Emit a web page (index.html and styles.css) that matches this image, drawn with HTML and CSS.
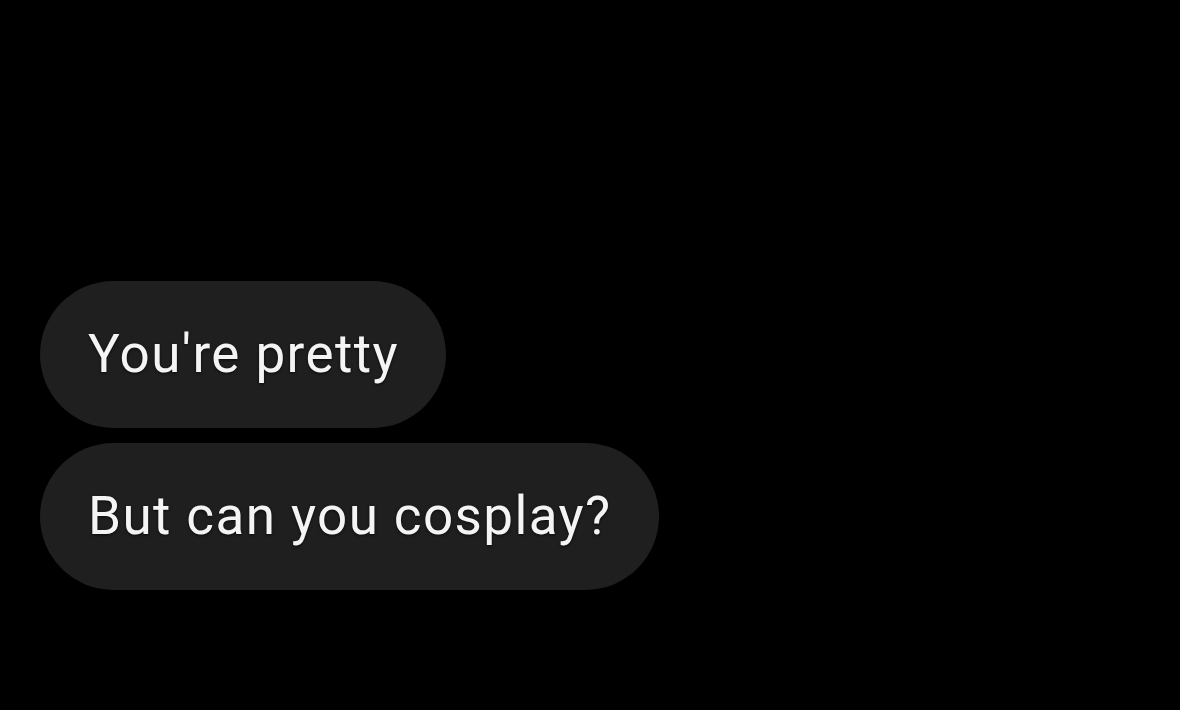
FILE: index.html
```html
<!DOCTYPE html>
<html>
<head>
<meta charset="utf-8">
<link rel="stylesheet" href="styles.css">
</head>
<body>
<div class="thread">
  <div class="bubble">You're pretty</div>
  <div class="bubble">But can you cosplay?</div>
</div>
</body>
</html>
```
FILE: styles.css
```css
html, body {
  margin: 0;
  padding: 0;
  background: #000;
  width: 1180px;
  height: 710px;
  overflow: hidden;
}
.thread {
  display: flex;
  flex-direction: column;
  align-items: flex-start;
  gap: 15px;
  padding: 281px 0 0 40px;
}
.bubble {
  box-sizing: border-box;
  height: 147px;
  display: flex;
  align-items: center;
  padding: 0 47px 2px 48px;
  border-radius: 74px;
  background: #1f1f1f;
  color: #f4f4f4;
  font-family: Roboto, "Open Sans", sans-serif;
  font-size: 53px;
  letter-spacing: 1.4px;
  text-shadow: 0 1px 3px rgba(0,0,0,0.7);
  white-space: nowrap;
}
```
